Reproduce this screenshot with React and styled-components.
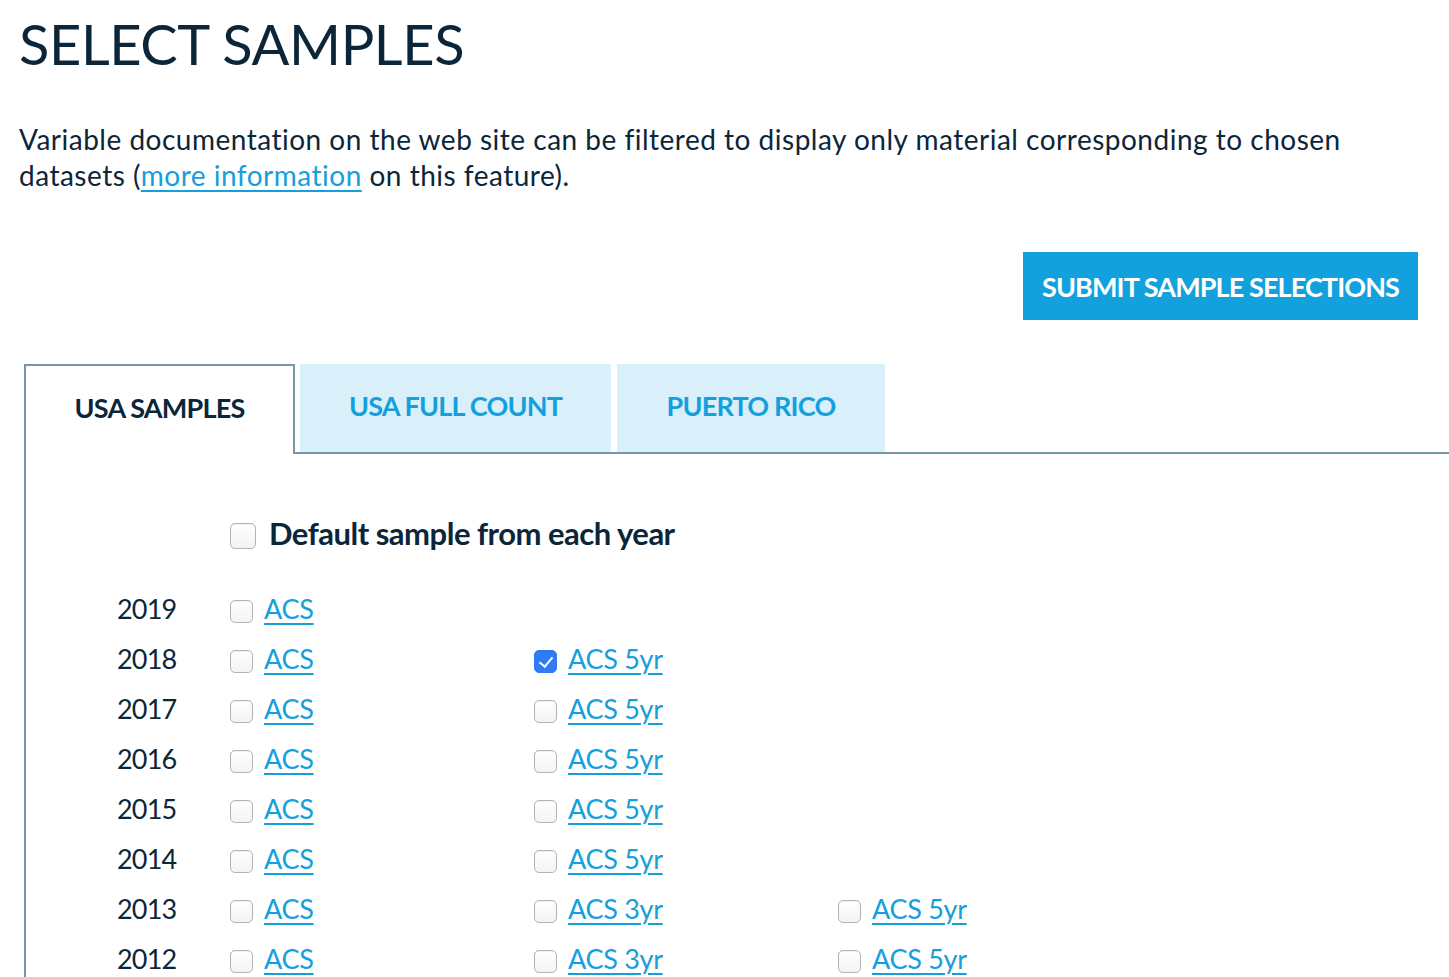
import React, { useState } from 'react';
import styled, { createGlobalStyle } from 'styled-components';

const GlobalStyle = createGlobalStyle`
    body {
        margin: 0;
        background: #ffffff;
        font-family: Lato, 'Open Sans', sans-serif;
        color: #0c2639;
    }
`;

const Page = styled.div`
    padding: 0 31px 0 19px;
    overflow: hidden;
    height: 977px;
`;

const Title = styled.h1`
    margin: 0;
    padding-top: 12px;
    font-size: 56px;
    font-weight: 400;
    line-height: 64px;
    letter-spacing: -0.4px;
`;

const Intro = styled.p`
    margin: 45px 0 0;
    max-width: 1345px;
    font-size: 28px;
    line-height: 36px;
    letter-spacing: 0.5px;
`;

const Link = styled.a`
    color: #14a0dc;
    text-decoration: underline;
    text-underline-offset: 4px;
    text-decoration-thickness: 2px;
    cursor: pointer;
`;

const ButtonRow = styled.div`
    display: flex;
    justify-content: flex-end;
    margin-top: 59px;
`;

const SubmitButton = styled.button`
    height: 68px;
    width: 395px;
    border: none;
    background: #13a1dd;
    color: #ffffff;
    font-family: Lato, sans-serif;
    font-weight: 700;
    font-size: 27px;
    letter-spacing: -0.9px;
    cursor: pointer;
`;

const Panel = styled.div`
    margin: 44px -31px 0 5px;
    border-left: 2px solid #7896ab;
    min-height: 700px;
`;

const TabBar = styled.div`
    display: flex;
    align-items: flex-end;
`;

const ActiveTab = styled.div`
    width: 269px;
    height: 90px;
    padding-bottom: 6px;
    box-sizing: border-box;
    border-top: 2px solid #7896ab;
    border-right: 2px solid #7896ab;
    display: flex;
    align-items: center;
    justify-content: center;
    font-weight: 700;
    font-size: 27px;
    letter-spacing: -0.8px;
    color: #0c2639;
`;

const TabRest = styled.div`
    flex: 1;
    display: flex;
    gap: 6px;
    padding-left: 5px;
    border-bottom: 2px solid #7896ab;
`;

const Tab = styled.div`
    width: ${(p) => p.$width}px;
    height: 88px;
    padding-bottom: 6px;
    box-sizing: border-box;
    background: #d9f0fa;
    display: flex;
    align-items: center;
    justify-content: center;
    font-weight: 700;
    font-size: 27px;
    letter-spacing: -0.8px;
    color: #14a0dc;
    cursor: pointer;
`;

const Body = styled.div`
    padding: 59px 0 0 91px;
`;

const DefaultRow = styled.label`
    display: flex;
    align-items: center;
    gap: 13px;
    margin-left: 113px;
    font-weight: 700;
    font-size: 31px;
    letter-spacing: -0.5px;
    height: 40px;
`;

const Grid = styled.div`
    display: grid;
    grid-template-columns: 113px repeat(3, 304px);
    grid-auto-rows: 50px;
    margin-top: 30px;
`;

const Year = styled.div`
    display: flex;
    align-items: center;
    font-size: 27px;
    letter-spacing: -0.8px;
`;

const Cell = styled.label`
    display: flex;
    align-items: center;
    gap: 11px;
    font-size: 27px;
    letter-spacing: -0.3px;
`;

const Box = styled.input`
    appearance: none;
    margin: 0;
    width: ${(p) => (p.$big ? 26 : 23)}px;
    height: ${(p) => (p.$big ? 26 : 23)}px;
    border: 1px solid #b3b3b3;
    border-radius: 5px;
    background: linear-gradient(#ffffff, #f3f3f3);
    box-shadow: inset 0 1px 1px rgba(0, 0, 0, 0.06);
    flex-shrink: 0;
    position: relative;
    top: 3px;
    cursor: pointer;

    &:checked {
        border-color: #2f7cf6;
        background: #2f7cf6;
    }

    &:checked::after {
        content: '';
        position: absolute;
        left: 7px;
        top: 3px;
        width: 6px;
        height: 11px;
        border: solid #ffffff;
        border-width: 0 2.5px 2.5px 0;
        transform: rotate(40deg);
    }
`;

const rows = [
    { year: 2019, samples: ['ACS'] },
    { year: 2018, samples: ['ACS', 'ACS 5yr'] },
    { year: 2017, samples: ['ACS', 'ACS 5yr'] },
    { year: 2016, samples: ['ACS', 'ACS 5yr'] },
    { year: 2015, samples: ['ACS', 'ACS 5yr'] },
    { year: 2014, samples: ['ACS', 'ACS 5yr'] },
    { year: 2013, samples: ['ACS', 'ACS 3yr', 'ACS 5yr'] },
    { year: 2012, samples: ['ACS', 'ACS 3yr', 'ACS 5yr'] },
    { year: 2011, samples: ['ACS', 'ACS 3yr', 'ACS 5yr'] },
];

const App = () => {
    const [picked, setPicked] = useState({ '2018-ACS 5yr': true });

    const toggle = (key) => {
        setPicked((prev) => ({ ...prev, [key]: !prev[key] }));
    };

    return (
        <>
            <GlobalStyle />
            <Page>
                <Title>SELECT SAMPLES</Title>
                <Intro>
                    Variable documentation on the web site can be filtered to display only material corresponding to chosen
                    datasets (<Link>more information</Link> on this feature).
                </Intro>
                <ButtonRow>
                    <SubmitButton>SUBMIT SAMPLE SELECTIONS</SubmitButton>
                </ButtonRow>
                <Panel>
                    <TabBar>
                        <ActiveTab>USA SAMPLES</ActiveTab>
                        <TabRest>
                            <Tab $width={311}>USA FULL COUNT</Tab>
                            <Tab $width={268}>PUERTO RICO</Tab>
                        </TabRest>
                    </TabBar>
                    <Body>
                        <DefaultRow>
                            <Box type="checkbox" $big />
                            Default sample from each year
                        </DefaultRow>
                        <Grid>
                            {rows.map((row) => (
                                <React.Fragment key={row.year}>
                                    <Year>{row.year}</Year>
                                    {row.samples.map((s) => {
                                        const key = `${row.year}-${s}`;
                                        return (
                                            <Cell key={key}>
                                                <Box type="checkbox" checked={!!picked[key]} onChange={() => toggle(key)} />
                                                <Link>{s}</Link>
                                            </Cell>
                                        );
                                    })}
                                    {Array.from({ length: 3 - row.samples.length }).map((_, i) => (
                                        <div key={i} />
                                    ))}
                                </React.Fragment>
                            ))}
                        </Grid>
                    </Body>
                </Panel>
            </Page>
        </>
    );
};

export default App;
